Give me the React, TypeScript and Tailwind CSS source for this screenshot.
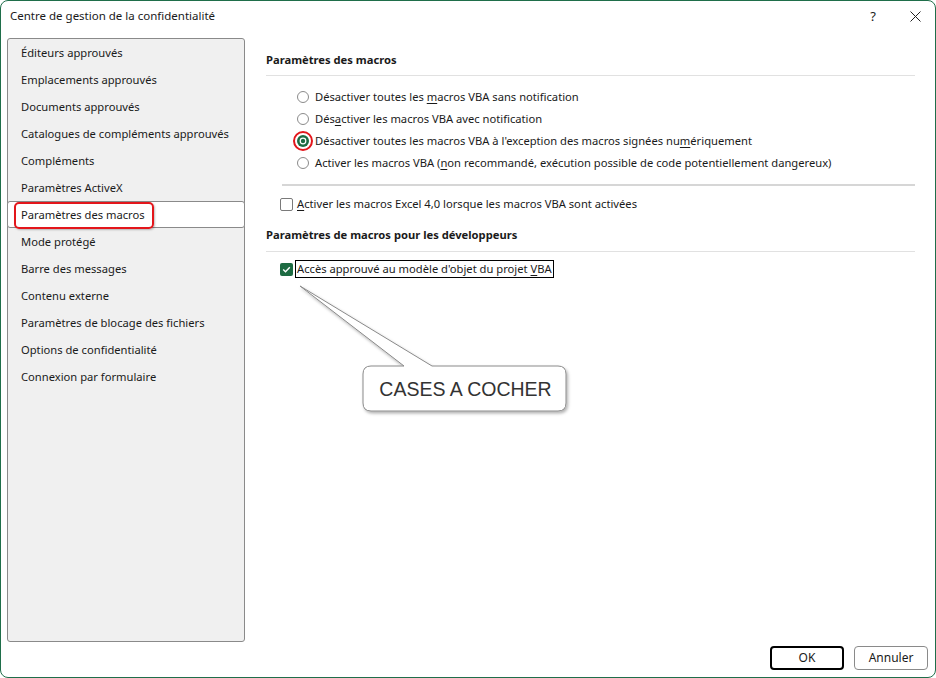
import React from "react";

const sideItems = [
  "Éditeurs approuvés",
  "Emplacements approuvés",
  "Documents approuvés",
  "Catalogues de compléments approuvés",
  "Compléments",
  "Paramètres ActiveX",
  "Paramètres des macros",
  "Mode protégé",
  "Barre des messages",
  "Contenu externe",
  "Paramètres de blocage des fichiers",
  "Options de confidentialité",
  "Connexion par formulaire",
];

const Radio = ({ checked }: { checked?: boolean }) => (
  <span className="relative flex h-[12px] w-[12px] shrink-0 items-center justify-center">
    {checked ? (
      <>
        <svg width="12" height="12" viewBox="0 0 12 12">
          <circle cx="6" cy="6" r="6" fill="#1d6b42" />
          <circle cx="6" cy="6" r="3.4" fill="#ffffff" />
          <circle cx="6" cy="6" r="2.2" fill="#1d6b42" />
        </svg>
        <span className="absolute left-[-4px] top-[-4px] h-[20px] w-[20px] rounded-full border-[2px] border-[#e3161b]" />
      </>
    ) : (
      <span className="h-[12px] w-[12px] rounded-full border border-[#8b8b8b] bg-white" />
    )}
  </span>
);

const U = ({ children }: { children: React.ReactNode }) => <span className="underline underline-offset-2">{children}</span>;

export default function App() {
  return (
    <div
      className="relative flex h-[678px] w-[936px] flex-col overflow-hidden rounded-[8px] border border-[#1f6e4a] bg-white text-[11.2px] text-[#1a1a1a]"
      style={{ fontFamily: '"Segoe UI", "Noto Sans", sans-serif' }}
    >
      {/* title bar */}
      <div className="flex h-[37px] items-start pl-[9px] pr-[14px] pt-[7px]">
        <span className="text-[11.5px] leading-[16px]">Centre de gestion de la confidentialité</span>
        <span className="ml-auto mr-[34px] text-[13px] leading-[16px]">?</span>
        <svg width="11" height="11" viewBox="0 0 11 11" className="mt-[3px]">
          <path d="M0.5 0.5 L10.5 10.5 M10.5 0.5 L0.5 10.5" stroke="#222" strokeWidth="1" />
        </svg>
      </div>

      <div className="flex pl-[6px] pr-[20px]">
        {/* sidebar */}
        <div className="h-[604px] w-[238px] shrink-0 rounded-[3px] border border-[#8a8a8a] bg-[#f0f0f0]">
          {sideItems.map((item, i) =>
            i === 6 ? (
              <div
                key={item}
                className="relative -mx-px flex h-[27px] items-center rounded-[3px] border border-[#8a8a8a] bg-white pl-[13px] pt-px"
              >
                {item}
                <span className="absolute left-[6px] top-0 h-[27px] w-[140px] rounded-[5px] border-[2px] border-[#e3161b] shadow-[1px_1px_2px_rgba(0,0,0,0.25)]" />
              </div>
            ) : (
              <div key={item} className="flex h-[27px] items-center pl-[13px] pt-px">
                {item}
              </div>
            )
          )}
        </div>

        {/* main */}
        <div className="ml-[21px] flex-1 pt-[14px]">
          <div className="font-bold leading-[16px]">Paramètres des macros</div>
          <div className="mt-[7px] h-px bg-[#e1e1e1]" />

          <div className="mt-[10px] flex flex-col pl-[31px]">
            <div className="flex h-[22px] items-center gap-[6px]">
              <Radio />
              <span>
                Désactiver toutes les <U>m</U>acros VBA sans notification
              </span>
            </div>
            <div className="flex h-[22px] items-center gap-[6px]">
              <Radio />
              <span>
                Dés<U>a</U>ctiver les macros VBA avec notification
              </span>
            </div>
            <div className="flex h-[22px] items-center gap-[6px]">
              <Radio checked />
              <span>
                Désactiver toutes les macros VBA à l'exception des macros signées nu<U>m</U>ériquement
              </span>
            </div>
            <div className="flex h-[22px] items-center gap-[6px]">
              <Radio />
              <span>
                Activer les macros VBA (<U>n</U>on recommandé, exécution possible de code potentiellement dangereux)
              </span>
            </div>
          </div>

          <div className="ml-[16px] mt-[10px] h-[2px] bg-[#d6d6d6]" />

          <div className="mt-[7px] flex h-[22px] items-center gap-[4px] pl-[14px]">
            <span className="h-[13px] w-[13px] shrink-0 rounded-[2px] border border-[#7a7a7a] bg-white" />
            <span>
              <U>A</U>ctiver les macros Excel 4,0 lorsque les macros VBA sont activées
            </span>
          </div>

          <div className="mt-[12px] font-bold leading-[16px]">Paramètres de macros pour les développeurs</div>
          <div className="mt-[8px] h-px bg-[#e1e1e1]" />

          <div className="mt-[8px] flex h-[18px] items-center gap-[2px] pl-[14px]">
            <span className="flex h-[13px] w-[13px] shrink-0 items-center justify-center rounded-[2px] bg-[#1d6b42]">
              <svg width="9" height="9" viewBox="0 0 9 9">
                <path d="M1.2 4.6 L3.5 6.8 L7.8 2.2" fill="none" stroke="#fff" strokeWidth="1.4" />
              </svg>
            </span>
            <span className="flex h-[18px] items-center border border-black px-[1px] leading-[14px]">
              <span>
                Accès approuvé au modèle d'objet du projet <U>V</U>BA
              </span>
            </span>
          </div>
        </div>
      </div>

      {/* footer */}
      <div className="flex justify-end gap-[10px] pr-[7px] pt-[4px]">
        <button className="h-[24px] w-[74px] rounded-[4px] border-[2px] border-black bg-white text-[12px]">OK</button>
        <button className="h-[24px] w-[74px] rounded-[4px] border border-[#8a8a8a] bg-white text-[12px]">Annuler</button>
      </div>

      {/* callout */}
      <svg
        className="absolute left-[289px] top-[279px]"
        width="292"
        height="146"
        viewBox="290 280 292 146"
      >
        <defs>
          <filter id="sh" x="-10%" y="-10%" width="130%" height="140%">
            <feDropShadow dx="1.5" dy="2" stdDeviation="1.5" floodColor="#000" floodOpacity="0.3" />
          </filter>
        </defs>
        <path
          d="M300 286 L404 366 L371 366 Q363 366 363 374 L363 403 Q363 411 371 411 L558 411 Q566 411 566 403 L566 374 Q566 366 558 366 L432 366 Z"
          fill="#ffffff"
          stroke="#8a8a8a"
          strokeWidth="1"
          filter="url(#sh)"
        />
      </svg>
      <div
        className="absolute left-[363px] top-[366px] flex h-[45px] w-[203px] items-center justify-center text-[19.5px] text-[#333333]"
        style={{ fontFamily: '"Liberation Sans", Arial, sans-serif' }}
      >
        CASES A COCHER
      </div>
    </div>
  );
}
